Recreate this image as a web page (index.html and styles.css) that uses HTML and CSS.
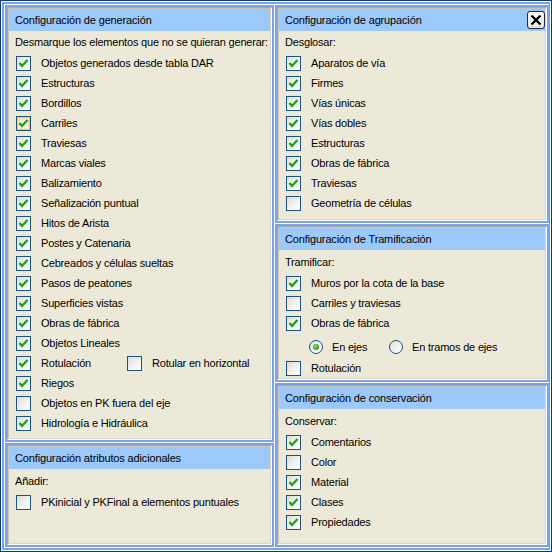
FILE: index.html
```html
<!DOCTYPE html>
<html lang="es">
<head>
<meta charset="utf-8">
<title>Configuración</title>
<link rel="stylesheet" href="styles.css">
</head>
<body>
<svg width="0" height="0" class="defs" aria-hidden="true">
  <symbol id="tk" viewBox="0 0 13 13">
    <polyline points="2.5,6 5,9 10.5,3" fill="none" stroke="#21a121" stroke-width="2.4"/>
  </symbol>
</svg>
<div class="window">
  <div class="frame">
    <div class="col left">
      <section class="panel">
        <div class="well"><div class="well-in">
          <div class="hdr">Configuración de generación</div>
          <div class="body">
            <div class="lbl">Desmarque los elementos que no se quieran generar:</div>
            <div class="row"><span class="cb"><svg><use href="#tk"/></svg></span><span>Objetos generados desde tabla DAR</span></div>
            <div class="row"><span class="cb"><svg><use href="#tk"/></svg></span><span>Estructuras</span></div>
            <div class="row"><span class="cb"><svg><use href="#tk"/></svg></span><span>Bordillos</span></div>
            <div class="row"><span class="cb hover"><svg><use href="#tk"/></svg></span><span>Carriles</span></div>
            <div class="row"><span class="cb"><svg><use href="#tk"/></svg></span><span>Traviesas</span></div>
            <div class="row"><span class="cb"><svg><use href="#tk"/></svg></span><span>Marcas viales</span></div>
            <div class="row"><span class="cb"><svg><use href="#tk"/></svg></span><span>Balizamiento</span></div>
            <div class="row"><span class="cb"><svg><use href="#tk"/></svg></span><span>Señalización puntual</span></div>
            <div class="row"><span class="cb"><svg><use href="#tk"/></svg></span><span>Hitos de Arista</span></div>
            <div class="row"><span class="cb"><svg><use href="#tk"/></svg></span><span>Postes y Catenaria</span></div>
            <div class="row"><span class="cb"><svg><use href="#tk"/></svg></span><span>Cebreados y células sueltas</span></div>
            <div class="row"><span class="cb"><svg><use href="#tk"/></svg></span><span>Pasos de peatones</span></div>
            <div class="row"><span class="cb"><svg><use href="#tk"/></svg></span><span>Superficies vistas</span></div>
            <div class="row"><span class="cb"><svg><use href="#tk"/></svg></span><span>Obras de fábrica</span></div>
            <div class="row"><span class="cb"><svg><use href="#tk"/></svg></span><span>Objetos Lineales</span></div>
            <div class="row"><span class="cb"><svg><use href="#tk"/></svg></span><span class="w85">Rotulación</span><span class="cb"></span><span>Rotular en horizontal</span></div>
            <div class="row"><span class="cb"><svg><use href="#tk"/></svg></span><span>Riegos</span></div>
            <div class="row"><span class="cb"></span><span>Objetos en PK fuera del eje</span></div>
            <div class="row"><span class="cb"><svg><use href="#tk"/></svg></span><span>Hidrología e Hidráulica</span></div>
          </div>
        </div></div>
      </section>
      <section class="panel">
        <div class="well"><div class="well-in">
          <div class="hdr">Configuración atributos adicionales</div>
          <div class="body b2">
            <div class="lbl">Añadir:</div>
            <div class="row"><span class="cb"></span><span>PKinicial y PKFinal a elementos puntuales</span></div>
          </div>
        </div></div>
      </section>
    </div>
    <div class="col right">
      <section class="panel">
        <div class="well"><div class="well-in">
          <div class="hdr">Configuración de agrupación
            <span class="close"><svg viewBox="0 0 16 16"><path d="M3.5 3.5 L12.5 12.5 M12.5 3.5 L3.5 12.5" stroke="#000" stroke-width="2.2" fill="none"/></svg></span>
          </div>
          <div class="body">
            <div class="lbl">Desglosar:</div>
            <div class="row"><span class="cb"><svg><use href="#tk"/></svg></span><span>Aparatos de vía</span></div>
            <div class="row"><span class="cb"><svg><use href="#tk"/></svg></span><span>Firmes</span></div>
            <div class="row"><span class="cb"><svg><use href="#tk"/></svg></span><span>Vías únicas</span></div>
            <div class="row"><span class="cb"><svg><use href="#tk"/></svg></span><span>Vías dobles</span></div>
            <div class="row"><span class="cb"><svg><use href="#tk"/></svg></span><span>Estructuras</span></div>
            <div class="row"><span class="cb"><svg><use href="#tk"/></svg></span><span>Obras de fábrica</span></div>
            <div class="row"><span class="cb"><svg><use href="#tk"/></svg></span><span>Traviesas</span></div>
            <div class="row"><span class="cb"></span><span>Geometría de células</span></div>
          </div>
        </div></div>
      </section>
      <section class="panel">
        <div class="well"><div class="well-in">
          <div class="hdr">Configuración de Tramificación</div>
          <div class="body b2">
            <div class="lbl">Tramificar:</div>
            <div class="row"><span class="cb"><svg><use href="#tk"/></svg></span><span>Muros por la cota de la base</span></div>
            <div class="row"><span class="cb"></span><span>Carriles y traviesas</span></div>
            <div class="row"><span class="cb"><svg><use href="#tk"/></svg></span><span>Obras de fábrica</span></div>
            <div class="row radios"><span class="rb on"></span><span class="w57">En ejes</span><span class="rb"></span><span>En tramos de ejes</span></div>
            <div class="row"><span class="cb"></span><span>Rotulación</span></div>
          </div>
        </div></div>
      </section>
      <section class="panel">
        <div class="well"><div class="well-in">
          <div class="hdr">Configuración de conservación</div>
          <div class="body b2">
            <div class="lbl">Conservar:</div>
            <div class="row"><span class="cb"><svg><use href="#tk"/></svg></span><span>Comentarios</span></div>
            <div class="row"><span class="cb"></span><span>Color</span></div>
            <div class="row"><span class="cb"><svg><use href="#tk"/></svg></span><span>Material</span></div>
            <div class="row"><span class="cb"><svg><use href="#tk"/></svg></span><span>Clases</span></div>
            <div class="row"><span class="cb"><svg><use href="#tk"/></svg></span><span>Propiedades</span></div>
          </div>
        </div></div>
      </section>
    </div>
  </div>
</div>
</body>
</html>
```
FILE: styles.css
```css
* { box-sizing: border-box; }
body {
  margin: 0;
  font: 11px "Liberation Sans", Arial, sans-serif;
  letter-spacing: -0.2px;
  color: #000;
  background: #fff;
}
.defs { position: absolute; }
.window {
  width: 552px;
  height: 552px;
  border: 1px solid #0c3a78;
  padding: 1px;
  background: #fff;
}
.frame {
  height: 100%;
  border: 2px solid #7aa2ea;
  border-right-width: 1px;
  padding: 1px 0 1px 1px;
  background: #fff;
  display: grid;
  grid-template-columns: 269px 1fr;
  gap: 1px;
}
.col { display: grid; gap: 1px; min-height: 0; }
.left { grid-template-rows: 437px 1fr; }
.right { grid-template-rows: 218px 158px 1fr; }
.panel {
  border: 2px solid #7aa2ea;
  display: flex;
  min-height: 0;
}
.well {
  flex: 1;
  display: flex;
  border: 1px solid;
  border-color: #aca899 #fff #fff #aca899;
}
.well-in {
  flex: 1;
  display: flex;
  flex-direction: column;
  border: 1px solid;
  border-color: #c9c5b4 #d9d6c8 #d9d6c8 #c9c5b4;
  background: #ece9d8;
}
.hdr {
  height: 22px;
  flex: none;
  background: #9cc8fa;
  display: flex;
  align-items: center;
  justify-content: space-between;
  padding: 0 0 0 6px;
  letter-spacing: -0.15px;
  white-space: nowrap;
}
.body { padding: 1px 0 0 6px; }
.b2 { padding-top: 2px; }
.lbl { height: 20px; line-height: 20px; margin-bottom: 1px; white-space: nowrap; }
.row {
  display: flex;
  align-items: flex-start;
  height: 20px;
  line-height: 20px;
  white-space: nowrap;
}
.cb {
  flex: none;
  width: 15px;
  height: 15px;
  margin: 3px 10px 0 1px;
  border: 1px solid #1c5180;
  background: linear-gradient(135deg, #dcdbd2 0%, #f3f3ef 55%, #fff 100%);
  display: flex;
}
.cb svg { width: 13px; height: 13px; }
.cb.hover { box-shadow: inset 0 0 0 1px #f6c75a, inset 0 0 0 2px #fbe3a0; }
.w85 { width: 85px; flex: none; }
.w57 { width: 57px; flex: none; }
.radios {
  height: 25px;
  padding: 2px 0 0 24px;
  align-items: center;
}
.rb {
  flex: none;
  width: 14px;
  height: 14px;
  margin-right: 9px;
  border: 1px solid #1c5180;
  border-radius: 50%;
  background: linear-gradient(135deg, #dcdbd2 0%, #f3f3ef 55%, #fff 100%);
  display: flex;
  align-items: center;
  justify-content: center;
}
.rb.on::after {
  content: "";
  width: 6px;
  height: 6px;
  border-radius: 50%;
  background: radial-gradient(circle at 40% 40%, #8fe08a 0%, #2aa52a 60%, #1d8a1d 100%);
}
.close {
  width: 18px;
  height: 18px;
  border: 1px solid #2b2b2b;
  border-radius: 3px;
  background: linear-gradient(#fbfbfb, #e2e2e2);
  display: flex;
  align-items: center;
  justify-content: center;
}
.close svg { width: 16px; height: 16px; }
```
